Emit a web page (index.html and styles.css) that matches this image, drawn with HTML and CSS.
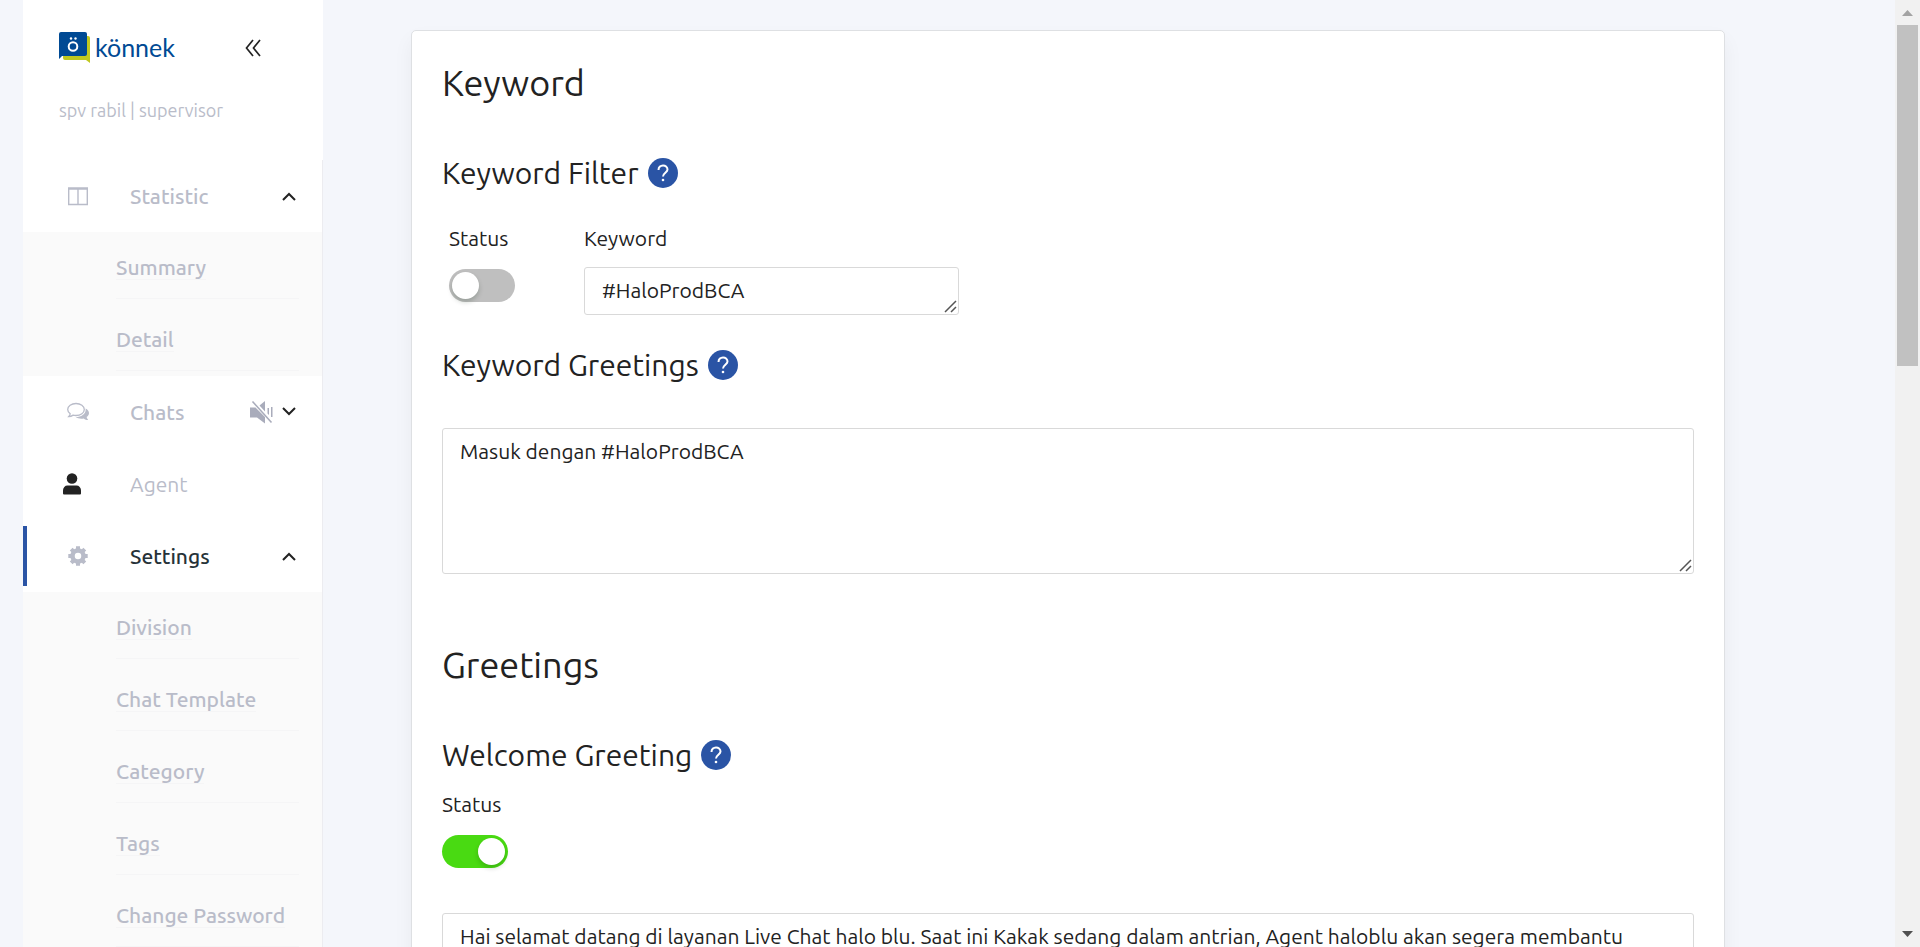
FILE: index.html
```html
<!DOCTYPE html>
<html lang="id">
<head>
<meta charset="utf-8">
<meta name="viewport" content="width=device-width, initial-scale=1">
<title>könnek – Keyword</title>
<link rel="stylesheet" href="styles.css">
</head>
<body>
<div class="app">
  <aside class="sidebar">
    <header class="brand">
      <div class="brand-row">
        <a class="logo" href="#">
          <svg class="logo-mark" viewBox="0 0 32 32" aria-hidden="true">
            <path d="M5 4h24a2 2 0 0 1 2 2v25l-4-3H6a2 2 0 0 1-2-2z" fill="#c0c81f"/>
            <path d="M2 0h24a2 2 0 0 1 2 2v20a2 2 0 0 1-2 2H3l-3 3V2a2 2 0 0 1 2-2z" fill="#004a94"/>
            <circle cx="14" cy="14.500" r="4.300" fill="none" stroke="#fff" stroke-width="2"/>
            <circle cx="12" cy="6.500" r="1.200" fill="#fff"/><circle cx="16.500" cy="6.500" r="1.200" fill="#fff"/>
          </svg>
          <span class="logo-text">könnek</span>
        </a>
        <button class="collapse" type="button" aria-label="Collapse menu">
          <svg viewBox="0 0 16 18" aria-hidden="true"><path d="M8 1 1.500 9 8 17M15 1 8.500 9 15 17" fill="none" stroke="#222" stroke-width="1.700"/></svg>
        </button>
      </div>
      <p class="user">spv rabil | supervisor</p>
    </header>
    <nav class="menu">
      <a class="item" href="#">
        <svg class="icon" viewBox="0 0 24 24" aria-hidden="true"><path d="M2.700 4h18.600v16.500H2.700zM12 5v15M3 5h18" fill="none" stroke="#b9bcc9" stroke-width="1.400"/></svg>
        <span class="label">Statistic</span>
        <svg class="chevron" viewBox="0 0 14 10" aria-hidden="true"><path d="m1 9 6-6 6 6"/></svg>
      </a>
      <ul class="submenu">
        <li><a href="#">Summary</a></li>
        <li><a href="#">Detail</a></li>
      </ul>
      <a class="item" href="#">
        <svg class="icon" viewBox="0 0 24 24" aria-hidden="true"><path d="M10 3.500c4.700 0 8.300 2.700 8.300 6s-3.600 6-8.300 6c-1 0-2-.1-2.900-.4-1.300.9-2.700 1.400-4.300 1.400.8-.8 1.300-1.700 1.400-2.700C2.700 12.600 1.700 11.100 1.700 9.500c0-3.300 3.600-6 8.300-6z" fill="none" stroke="#b9bcc9" stroke-width="1.300"/><path d="M19.500 8.500c2.200 1 3.500 2.600 3.500 4.500 0 1.600-.9 3-2.400 4 .2 1.100.8 2 1.600 3-1.700 0-3.200-.5-4.500-1.500-3 .6-6 0-8-1.400 5.500 0 10-3 10-7.600z" fill="#b9bcc9"/></svg>
        <span class="label">Chats</span>
        <svg class="mute" viewBox="0 0 24 24" aria-hidden="true"><path d="M1 7.500h5.500L16 17v6.500L8 17.500H1zM10.500 5.500 16 1v10.500zM18.500 8h1.500v7l-1.500-1.500zM22 7h1.500v10H22z" fill="#a9acbb"/><path d="m3.500 1.500 19 21" stroke="#a9acbb" stroke-width="1.600"/></svg>
        <svg class="chevron" viewBox="0 0 14 10" aria-hidden="true"><path d="m1 1 6 6 6-6"/></svg>
      </a>
      <a class="item light" href="#">
        <svg class="icon person" viewBox="0 0 24 24" aria-hidden="true"><circle cx="12" cy="6.500" r="5.300" fill="#222"/><path d="M3 21.500v-3c0-3 2-5 4.500-5h9c2.500 0 4.500 2 4.500 5v3q0 1-1 1H4q-1 0-1-1z" fill="#222"/></svg>
        <span class="label">Agent</span>
      </a>
      <a class="item active" href="#">
        <svg class="icon" viewBox="0 0 24 24" aria-hidden="true"><circle cx="12" cy="12" r="5.500" fill="none" stroke="#b9bcc9" stroke-width="4.500"/><path d="M12 2.300v3M12 18.700v3M2.300 12h3M18.700 12h3M5.200 5.200l2 2M16.800 16.800l2 2M5.200 18.800l2-2M16.800 7.200l2-2" stroke="#b9bcc9" stroke-width="4"/></svg>
        <span class="label">Settings</span>
        <svg class="chevron" viewBox="0 0 14 10" aria-hidden="true"><path d="m1 9 6-6 6 6"/></svg>
      </a>
      <ul class="submenu">
        <li><a href="#">Division</a></li>
        <li><a href="#">Chat Template</a></li>
        <li><a href="#">Category</a></li>
        <li><a href="#">Tags</a></li>
        <li><a href="#">Change Password</a></li>
      </ul>
    </nav>
  </aside>

  <main class="content">
    <form class="card">
      <section class="block">
        <h1>Keyword</h1>
        <h2>Keyword Filter <button class="help" type="button" aria-label="Help: Keyword Filter"><svg viewBox="0 0 30 30" aria-hidden="true"><path d="M10.500 12c0-6 9-6 9-.5 0 3-4.500 3.500-4.500 7" fill="none" stroke="#fff" stroke-width="2"/><circle cx="15" cy="22" r="1.300" fill="#fff"/></svg></button></h2>
        <div class="filter">
          <div class="field">
            <label for="filter-status">Status</label>
            <input class="switch" id="filter-status" type="checkbox" role="switch">
          </div>
          <div class="field">
            <label for="filter-keyword">Keyword</label>
            <textarea class="box short" id="filter-keyword" rows="1">#HaloProdBCA</textarea>
          </div>
        </div>
        <h2 id="kg">Keyword Greetings <button class="help" type="button" aria-label="Help: Keyword Greetings"><svg viewBox="0 0 30 30" aria-hidden="true"><path d="M10.500 12c0-6 9-6 9-.5 0 3-4.500 3.500-4.500 7" fill="none" stroke="#fff" stroke-width="2"/><circle cx="15" cy="22" r="1.300" fill="#fff"/></svg></button></h2>
        <textarea class="box tall" aria-labelledby="kg">Masuk dengan #HaloProdBCA</textarea>
      </section>
      <section class="block">
        <h1>Greetings</h1>
        <h2 id="wg">Welcome Greeting <button class="help" type="button" aria-label="Help: Welcome Greeting"><svg viewBox="0 0 30 30" aria-hidden="true"><path d="M10.500 12c0-6 9-6 9-.5 0 3-4.500 3.500-4.500 7" fill="none" stroke="#fff" stroke-width="2"/><circle cx="15" cy="22" r="1.300" fill="#fff"/></svg></button></h2>
        <div class="field welcome">
          <label for="welcome-status">Status</label>
          <input class="switch" id="welcome-status" type="checkbox" role="switch" checked>
        </div>
        <textarea class="box tall" aria-labelledby="wg">Hai selamat datang di layanan Live Chat halo blu. Saat ini Kakak sedang dalam antrian, Agent haloblu akan segera membantu</textarea>
      </section>
    </form>
  </main>

  <div class="scrollbar" aria-hidden="true">
    <svg class="arrow" viewBox="0 0 25 25"><path d="M7 16h11l-5.500-6z" fill="#a3a3a3"/></svg>
    <div class="track"><div class="thumb"></div></div>
    <svg class="arrow" viewBox="0 0 25 25"><path d="M7 9h11l-5.500 6z" fill="#505050"/></svg>
  </div>
</div>
</body>
</html>
```
FILE: styles.css
```css
* { box-sizing: border-box; }

body {
  margin: 0;
  background: #f4f6fb;
  color: #222;
  font-family: Ubuntu, "Noto Sans", sans-serif;
  font-size: 21px;
  line-height: 30px;
}

a { color: inherit; text-decoration: none; }
button { padding: 0; border: 0; background: none; cursor: pointer; }
svg { display: block; flex: none; }

.app { display: flex; height: 100vh; overflow: hidden; padding-left: 23px; }

/* Sidebar */
.sidebar { flex: none; width: 300px; background: #fff; color: #b9bcc9; }
.brand { height: 160px; padding: 32px 62px 0 36px; }
.brand-row { display: flex; align-items: center; justify-content: space-between; height: 32px; }
.logo { display: flex; align-items: center; gap: 4px; }
.logo-mark { width: 32px; height: 32px; }
.logo-text { font-family: Lato, sans-serif; font-size: 25px; line-height: 28px; padding-bottom: 2px; color: #004a94; }
.collapse svg { width: 16px; height: 18px; }
.user { margin: 31px 0 0; font-size: 18px; white-space: nowrap; }

.menu { display: flex; flex-direction: column; border-right: 1px solid #ececf0; font-weight: 500; }
.item {
  display: flex;
  align-items: center;
  height: 60px;
  margin: 6px 0;
  padding: 0 26px 0 43px;
}
.item.active { padding-left: 39px; border-left: 4px solid #2a54a5; color: #263238; }
.item.light { font-weight: 400; }
.icon { width: 24px; height: 24px; margin-right: 40px; }
.person { margin-left: -6px; margin-right: 46px; }
.label { flex: 1; }
.mute { width: 24px; height: 24px; margin-right: 9px; }
.chevron { width: 14px; height: 10px; fill: none; stroke: #222; stroke-width: 2; }

.submenu { margin: 0; padding: 0 23px 5px 93px; list-style: none; background: #fafafa; }
.submenu li { height: 67px; padding-top: 20px; border-bottom: 1px solid #f5f5f6; }
.submenu li + li { height: 72px; padding-top: 25px; }
.submenu a { border-bottom: 1px solid #f5f5f6; }

/* Settings card */
.content { flex: 1; min-width: 0; padding: 30px 170px 0 88px; }
.card {
  padding: 30px;
  background: #fff;
  border: 1px solid #dee0e3;
  border-radius: 5px;
  box-shadow: 0 10px 20px rgba(0, 0, 0, .05);
}
.block { margin-bottom: 69px; }
h1 { margin: 0 0 48px; font-size: 36px; line-height: 44px; font-weight: 400; }
h2 { display: flex; align-items: center; gap: 9px; margin: 0; font-size: 30px; line-height: 40px; font-weight: 400; }
.help { width: 30px; height: 30px; border-radius: 50%; background: #2a54a5; }
.help svg { width: 30px; height: 30px; }

.filter { display: flex; gap: 69px; padding: 30px 7px 30px; }
.field { display: flex; flex-direction: column; align-items: flex-start; gap: 14px; }
.welcome { margin: 14px 0 43px; }

.switch {
  appearance: none;
  display: flex;
  width: 66px;
  height: 33px;
  margin: 2px 0;
  padding: 3px;
  border-radius: 17px;
  background: #bfbfbf;
}
.switch::before {
  content: "";
  width: 27px;
  height: 27px;
  border-radius: 50%;
  background: #fff;
  box-shadow: 0 3px 5px rgba(0, 35, 11, .2);
}
.switch:checked { justify-content: flex-end; background: #49da12; }

.box {
  display: block;
  padding: 7px 17px;
  border: 1px solid #d9d9d9;
  border-radius: 3px;
  background: #fff;
  color: #222;
  font: inherit;
  overflow: hidden;
}
.box::-webkit-resizer {
  background: url("data:image/svg+xml,%3Csvg xmlns='http://www.w3.org/2000/svg' viewBox='0 0 15 15'%3E%3Cpath d='M2 13 13 2M8 13l5-5' fill='none' stroke='%23555' stroke-width='1.500'/%3E%3C/svg%3E") center / 100% no-repeat;
}
.short { width: 375px; height: 48px; }
.tall { width: 100%; height: 146px; }
#kg + .tall { margin-top: 43px; }

/* Scrollbar */
.scrollbar { display: flex; flex-direction: column; flex: none; width: 25px; background: #f1f1f1; }
.arrow { width: 25px; height: 25px; }
.track { flex: 1; padding: 0 2px; }
.thumb { height: 38%; background: #c1c1c1; }
```
